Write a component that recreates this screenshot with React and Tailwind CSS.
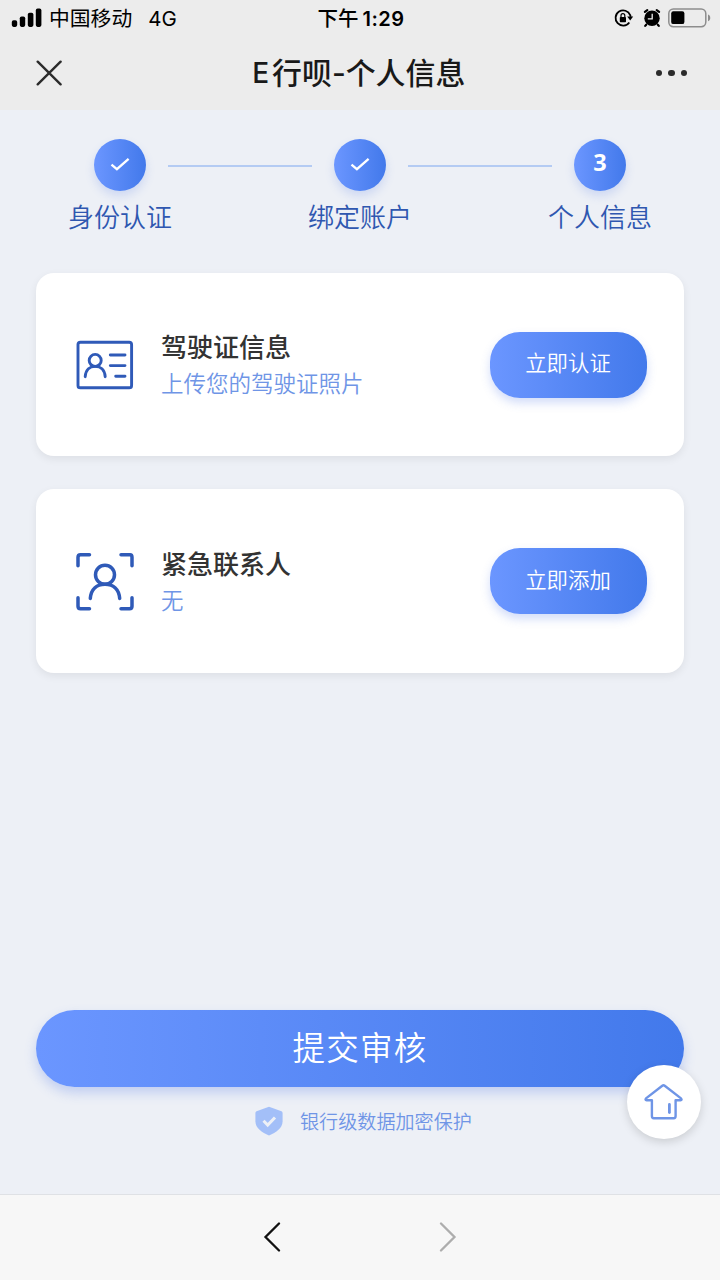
import React from "react";

const steps = [
  { label: "身份认证", done: true },
  { label: "绑定账户", done: true },
  { label: "个人信息", done: false },
];

const StatusBar = () => (
  <div className="flex h-[37px] items-center text-black">
    <div className="flex flex-1 items-center pl-[11px]">
      <svg width="31" height="21" viewBox="0 0 31 21">
        <rect x="0.8" y="12.2" width="5.4" height="6.7" rx="1.8" />
        <rect x="8.8" y="8.5" width="5.4" height="10.4" rx="1.8" />
        <rect x="16.8" y="4.7" width="5.6" height="14.2" rx="1.8" />
        <rect x="24.8" y="0.6" width="5.6" height="18.3" rx="1.8" />
      </svg>
      <span className="ml-[7px] pt-px text-[20.8px] leading-[36px]">中国移动</span>
      <span className="ml-[16px] text-[20.5px] leading-[36px]">4G</span>
    </div>
    <div className="flex items-center gap-[4px] leading-[36px]">
      <span className="pt-px text-[20.5px] font-medium">下午</span>
      <span className="text-[20px] font-semibold tracking-[0.5px]">1:29</span>
    </div>
    <div className="flex flex-1 items-center justify-end pr-[9px]">
      <svg width="20" height="21" viewBox="0 0 20 21">
        <path d="M15.3 14.500a7.6 7.6 0 1 1 .9-7.4a7 7 0 0 1 .4 1.7" fill="none" stroke="#000" strokeWidth="1.8" />
        <path d="M13.2 8.4h6l-3 4z" />
        <rect x="5.8" y="9" width="6.2" height="5.2" rx="0.8" />
        <path d="M7 9.2V7.600a1.9 1.9 0 0 1 3.8 0V9.2" fill="none" stroke="#000" strokeWidth="1.2" />
      </svg>
      <svg className="ml-[8.5px]" width="18" height="21" viewBox="0 0 18 21">
        <circle cx="9" cy="10.3" r="7.7" />
        <path d="M1.9 3.9l2.4-1.8M16.1 3.9l-2.4-1.8M3.2 16.7l-1 1.2M14.8 16.7l1 1.2" stroke="#000" strokeWidth="2.2" strokeLinecap="round" />
        <path d="M9.2 5.700v5.2H4.8" fill="none" stroke="#ededed" strokeWidth="1.3" />
      </svg>
      <svg className="ml-[7.5px]" width="43" height="21" viewBox="0 0 43 21">
        <rect x="0.8" y="0.9" width="37" height="17.8" rx="4.6" fill="none" stroke="#8d8d8d" strokeWidth="1.5" />
        <rect x="3.2" y="3.3" width="13.2" height="12.8" rx="2.2" />
        <path d="M40 6.400c3 1 3 5.800 0 6.800z" fill="#8d8d8d" />
      </svg>
    </div>
  </div>
);

const NavBar = () => (
  <div className="flex h-[73px] items-center justify-between pr-[33px] pb-px pl-[36px]">
    <svg width="26" height="26" viewBox="0 0 26 26" stroke="#2b2b2b" strokeWidth="2.4" strokeLinecap="round">
      <path d="M1.7 1.7L24.6 24.3M24.6 1.7L1.7 24.3" />
    </svg>
    <h1 className="flex items-center text-[29.9px] leading-[70px] font-medium text-[#191919]">
      <span className="mr-[3px] text-[28px]">E</span>行呗
      <span>-</span>个人信息
    </h1>
    <div className="flex gap-[6px]">
      <span className="size-[6.5px] rounded-full bg-[#2b2b2b]" />
      <span className="size-[6.5px] rounded-full bg-[#2b2b2b]" />
      <span className="size-[6.5px] rounded-full bg-[#2b2b2b]" />
    </div>
  </div>
);

const Steps = () => (
  <div className="pt-[29px]">
    <div className="flex items-center px-[94px]">
      {steps.map((step, i) => (
        <React.Fragment key={step.label}>
          {i > 0 && <div className="mx-[22px] mt-px h-[2px] flex-1 bg-[#b4cbf3]" />}
          <div className="flex size-[52px] items-center justify-center rounded-full bg-linear-to-r from-[#6b96ff] to-[#4279eb] shadow-[0_5px_10px_rgba(80,120,230,0.2)]">
            {step.done ? (
              <svg width="20" height="16" viewBox="0 0 20 16" fill="none" stroke="#fff" strokeWidth="2.3">
                <path d="M1.5 7.6L6.9 12.2L18.6 1.8" />
              </svg>
            ) : (
              <span className="-mt-[4px] font-['Open_Sans'] text-[23.5px] font-bold text-white">{i + 1}</span>
            )}
          </div>
        </React.Fragment>
      ))}
    </div>
    <div className="grid grid-cols-3 pt-px text-center text-[26px] leading-[52px] font-[350] text-[#2f57b0]">
      {steps.map((step) => (
        <span key={step.label}>{step.label}</span>
      ))}
    </div>
  </div>
);

const LicenseIcon = () => (
  <svg width="58" height="58" viewBox="0 0 58 58" fill="none" stroke="#2f5ab8" strokeWidth="2.9" strokeLinecap="round">
    <rect x="2" y="6.2" width="53.6" height="45.6" rx="2.4" />
    <circle cx="19.2" cy="24.4" r="6" />
    <path d="M9.2 40.7c.5-7 4.8-10.3 10-10.3s9.5 3.3 10 10.3" />
    <path d="M34.3 19h14.7M34.3 29.6h14.7M39.7 40.2h9.3" />
  </svg>
);

const ContactIcon = () => (
  <svg width="58" height="59" viewBox="0 0 58 59" fill="none" stroke="#2f5ab8" strokeWidth="3.5" strokeLinecap="round">
    <path d="M2 13.8V5.3Q2 2.8 4.5 2.8H13.5M45 2.8h9Q56 2.8 56 5.3V13.8M56 45.8v8.5Q56 56.8 53.5 56.8H45M13.5 56.8H4.5Q2 56.8 2 54.3V45.8" />
    <circle cx="29" cy="22.8" r="9.5" />
    <path d="M14.3 46.4c.8-9.5 6.7-14.2 14.7-14.2s13.9 4.7 14.7 14.2" />
  </svg>
);

const InfoCard = ({ icon, title, desc, action }) => (
  <div className="flex h-[183.5px] items-center rounded-[18px] bg-white pt-px pr-[37px] pl-[40px] shadow-[0_3px_8px_rgba(0,0,0,0.07)]">
    {icon}
    <div className="ml-[27px] flex-1 pt-[2px]">
      <div className="text-[26px] leading-[36px] font-medium text-[#333]">{title}</div>
      <div className="text-[22.5px] leading-[35px] font-[350] text-[#6f95e6]">{desc}</div>
    </div>
    <button className="h-[66px] w-[157px] rounded-[30px] bg-linear-to-r from-[#6b96ff] to-[#4279eb] pr-px pb-[3px] text-[21.4px] font-[350] text-white shadow-[0_5px_10px_rgba(80,120,230,0.25)]">
      {action}
    </button>
  </div>
);

const App = () => {
  return (
    <div className="flex h-[1280px] w-[720px] flex-col overflow-hidden bg-[#edf0f6] font-['Inter','Noto_Sans_CJK_SC',sans-serif]">
      <header className="bg-[#ececec]">
        <StatusBar />
        <NavBar />
      </header>

      <main className="flex flex-1 flex-col">
        <Steps />
        <div className="mt-[28.7px] flex flex-col gap-[33px] px-[36px]">
          <InfoCard icon={<LicenseIcon />} title="驾驶证信息" desc="上传您的驾驶证照片" action="立即认证" />
          <InfoCard icon={<ContactIcon />} title="紧急联系人" desc="无" action="立即添加" />
        </div>

        <div className="relative mt-auto px-[36px] pb-[51px]">
          <button className="h-[77px] w-full rounded-full bg-linear-to-r from-[#6b96ff] to-[#4279eb] pt-px text-[32.5px] font-[350] tracking-[1.2px] text-white shadow-[0_6px_12px_rgba(80,120,230,0.28)]">
            提交审核
          </button>
          <div className="mt-[12px] flex h-[44px] items-center pb-px pl-[219px]">
            <svg width="28" height="30" viewBox="0 0 28 30">
              <path d="M14 .8L26.5 5.3Q27.6 5.7 27.6 7v8.3c0 6.8-6.5 11.2-13.6 14.2C6.9 26.5.4 22.1.4 15.3V7Q.4 5.7 1.5 5.3z" fill="#a3bff8" />
              <path d="M8.5 14.8l4.2 4.2 7.3-7.5" fill="none" stroke="#edf0f6" strokeWidth="3" />
            </svg>
            <span className="ml-[17px] pt-[3px] text-[19.1px] font-[350] text-[#6f95e6]">银行级数据加密保护</span>
          </div>
          <button className="absolute top-[55px] right-[19px] flex size-[74px] items-center justify-center rounded-full bg-white shadow-[0_3px_10px_rgba(0,0,0,0.15)]">
            <svg width="40" height="40" viewBox="0 0 40 40" fill="none" stroke="#6f95e6" strokeWidth="2.4" strokeLinejoin="round" strokeLinecap="round">
              <path d="M18.3 3.8Q19.5 2.9 20.7 3.8L37 16.4Q38.4 18.1 36.5 18.2H31.6V34.1Q31.6 36.3 29.8 36.3H9.7Q7.9 36.3 7.9 34.1V18.2H2.6Q.8 18.1 2 16.4z" />
              <path d="M25.4 22.5v8" strokeWidth="2.8" />
            </svg>
          </button>
        </div>
      </main>

      <footer className="flex h-[86px] items-center border-t border-[#dfe1e5] bg-[#f7f7f7] pb-px pl-[263px]">
        <svg width="18" height="30" viewBox="0 0 18 30" fill="none" stroke="#111" strokeWidth="2.3" strokeLinecap="round">
          <path d="M16 1.5L2.5 15L16 28.5" />
        </svg>
        <svg className="ml-[158px]" width="18" height="30" viewBox="0 0 18 30" fill="none" stroke="#adadad" strokeWidth="2.3" strokeLinecap="round">
          <path d="M2 1.5L15.5 15L2 28.5" />
        </svg>
      </footer>
    </div>
  );
};

export default App;
